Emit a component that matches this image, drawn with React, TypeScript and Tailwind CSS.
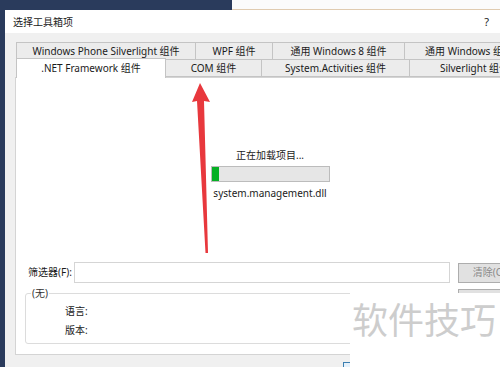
import React from 'react';

const backTabs = [
  { label: 'Windows Phone Silverlight 组件', w: 'w-[179px]' },
  { label: 'WPF 组件', w: 'w-[77px]' },
  { label: '通用 Windows 8 组件', w: 'w-[132px]' },
  { label: '通用 Windows 组件', w: 'w-[130px]' },
];

const frontTabs = [
  { label: '.NET Framework 组件', w: 'w-[150px]', active: true },
  { label: 'COM 组件', w: 'w-[96px]' },
  { label: 'System.Activities 组件', w: 'w-[148px]' },
  { label: 'Silverlight 组件', w: 'w-[130px]' },
];

const Arrow = () => (
  <svg className="absolute left-0 top-0 pointer-events-none" width="500" height="367" viewBox="0 0 500 367">
    <polygon points="200,83 192,102 197,101 205.5,253 208,253 204,101 210,102" fill="#e8383d" />
  </svg>
);

export default function App() {
  return (
    <div className="relative w-[500px] h-[367px] overflow-hidden bg-[#2a3b5c] text-[10px] text-[#1b1b1b] font-['Noto_Sans','Noto_Sans_CJK_SC',sans-serif]">
      {/* window behind the dialog */}
      <div className="flex h-[10px]">
        <div className="w-[232px] bg-[#2a3b5c]" />
        <div className="flex-1 bg-[#fbfbfb] border-b border-[#e0cbb0]" />
      </div>

      <div className="ml-[5px] w-[530px] h-[357px] flex flex-col bg-[#f0f0f0]">
        {/* title bar */}
        <div className="h-[23px] bg-white flex items-center pl-[8px] pr-[46px]">
          <span className="text-[10px] leading-none">选择工具箱项</span>
          <span className="ml-auto text-[11px] leading-none">?</span>
        </div>

        <div className="flex flex-col pl-[10px] pt-[9px]">
          {/* back tab row */}
          <div className="flex pl-[1px] h-[17px]">
            {backTabs.map((t) => (
              <div
                key={t.label}
                className={`${t.w} shrink-0 flex items-center justify-center border border-b-0 border-r-0 last:border-r border-[#c4c4c4] bg-[#ececec] whitespace-nowrap`}
              >
                {t.label}
              </div>
            ))}
          </div>
          {/* front tab row */}
          <div className="flex pl-[1px] h-[18px] relative z-10">
            {frontTabs.map((t) =>
              t.active ? (
                <div
                  key={t.label}
                  className={`${t.w} shrink-0 h-[20px] -mt-[1px] flex items-center justify-center border border-b-0 border-[#c4c4c4] bg-white whitespace-nowrap`}
                >
                  {t.label}
                </div>
              ) : (
                <div
                  key={t.label}
                  className={`${t.w} shrink-0 flex items-center justify-center border border-l-0 border-[#c4c4c4] bg-[#ececec] whitespace-nowrap`}
                >
                  {t.label}
                </div>
              )
            )}
          </div>

          {/* tab page */}
          <div className="w-[510px] h-[278px] bg-white border border-[#d4d4d4] flex flex-col">
            <div className="flex flex-col items-center pt-[69px]">
              <div className="leading-[16px]">正在加载项目...</div>
              <div className="mt-[3px] w-[119px] h-[16px] bg-[#e6e6e6] border border-[#bcbcbc] flex">
                <div className="w-[7px] bg-[#06b025]" />
              </div>
              <div className="mt-[3px] leading-[16px]">system.management.dll</div>
            </div>

            <div className="mt-[61px] flex items-center pl-[12px] h-[21px]">
              <span className="w-[46px] shrink-0 whitespace-nowrap">筛选器(F):</span>
              <div className="w-[376px] h-[21px] shrink-0 border border-[#d5d5d5] bg-white" />
              <div className="ml-[8px] w-[62px] h-[20px] shrink-0 border border-[#adadad] bg-[#e1e1e1] flex items-center justify-center text-[#8a8a8a] whitespace-nowrap">
                清除(C)
              </div>
            </div>

            <div className="flex pl-[9px] mt-[6px]">
              <div className="relative mt-[4px] w-[425px] h-[51px] shrink-0 border border-[#dcdcdc] rounded-[3px]">
                <span className="absolute left-[5px] -top-[9px] bg-white px-[1px] leading-[16px] text-[#333]">(无)</span>
                <div className="pl-[39px] pt-[9px] flex flex-col gap-[3px]">
                  <span className="leading-[16px]">语言:</span>
                  <span className="leading-[16px]">版本:</span>
                </div>
              </div>
              <div className="ml-[8px] w-[62px] h-[20px] shrink-0 border border-[#adadad] bg-[#e1e1e1]" />
            </div>
          </div>

          {/* bottom strip */}
          <div className="h-[12px] flex">
            <div className="ml-[328px] mt-[7px] w-[75px] h-[20px] shrink-0 border border-[#3c7fb1] bg-[#e5f1fb]" />
          </div>
        </div>
      </div>

      <Arrow />

      {/* watermark */}
      <div className="absolute left-[350px] top-[293px] w-[150px] h-[74px] bg-white">
        <div className="pl-[2px] pt-[5px] text-[36px] leading-[40px] text-[#cdcdcd] font-['Noto_Sans_CJK_SC',sans-serif] whitespace-nowrap">
          软件技巧
        </div>
      </div>
    </div>
  );
}
